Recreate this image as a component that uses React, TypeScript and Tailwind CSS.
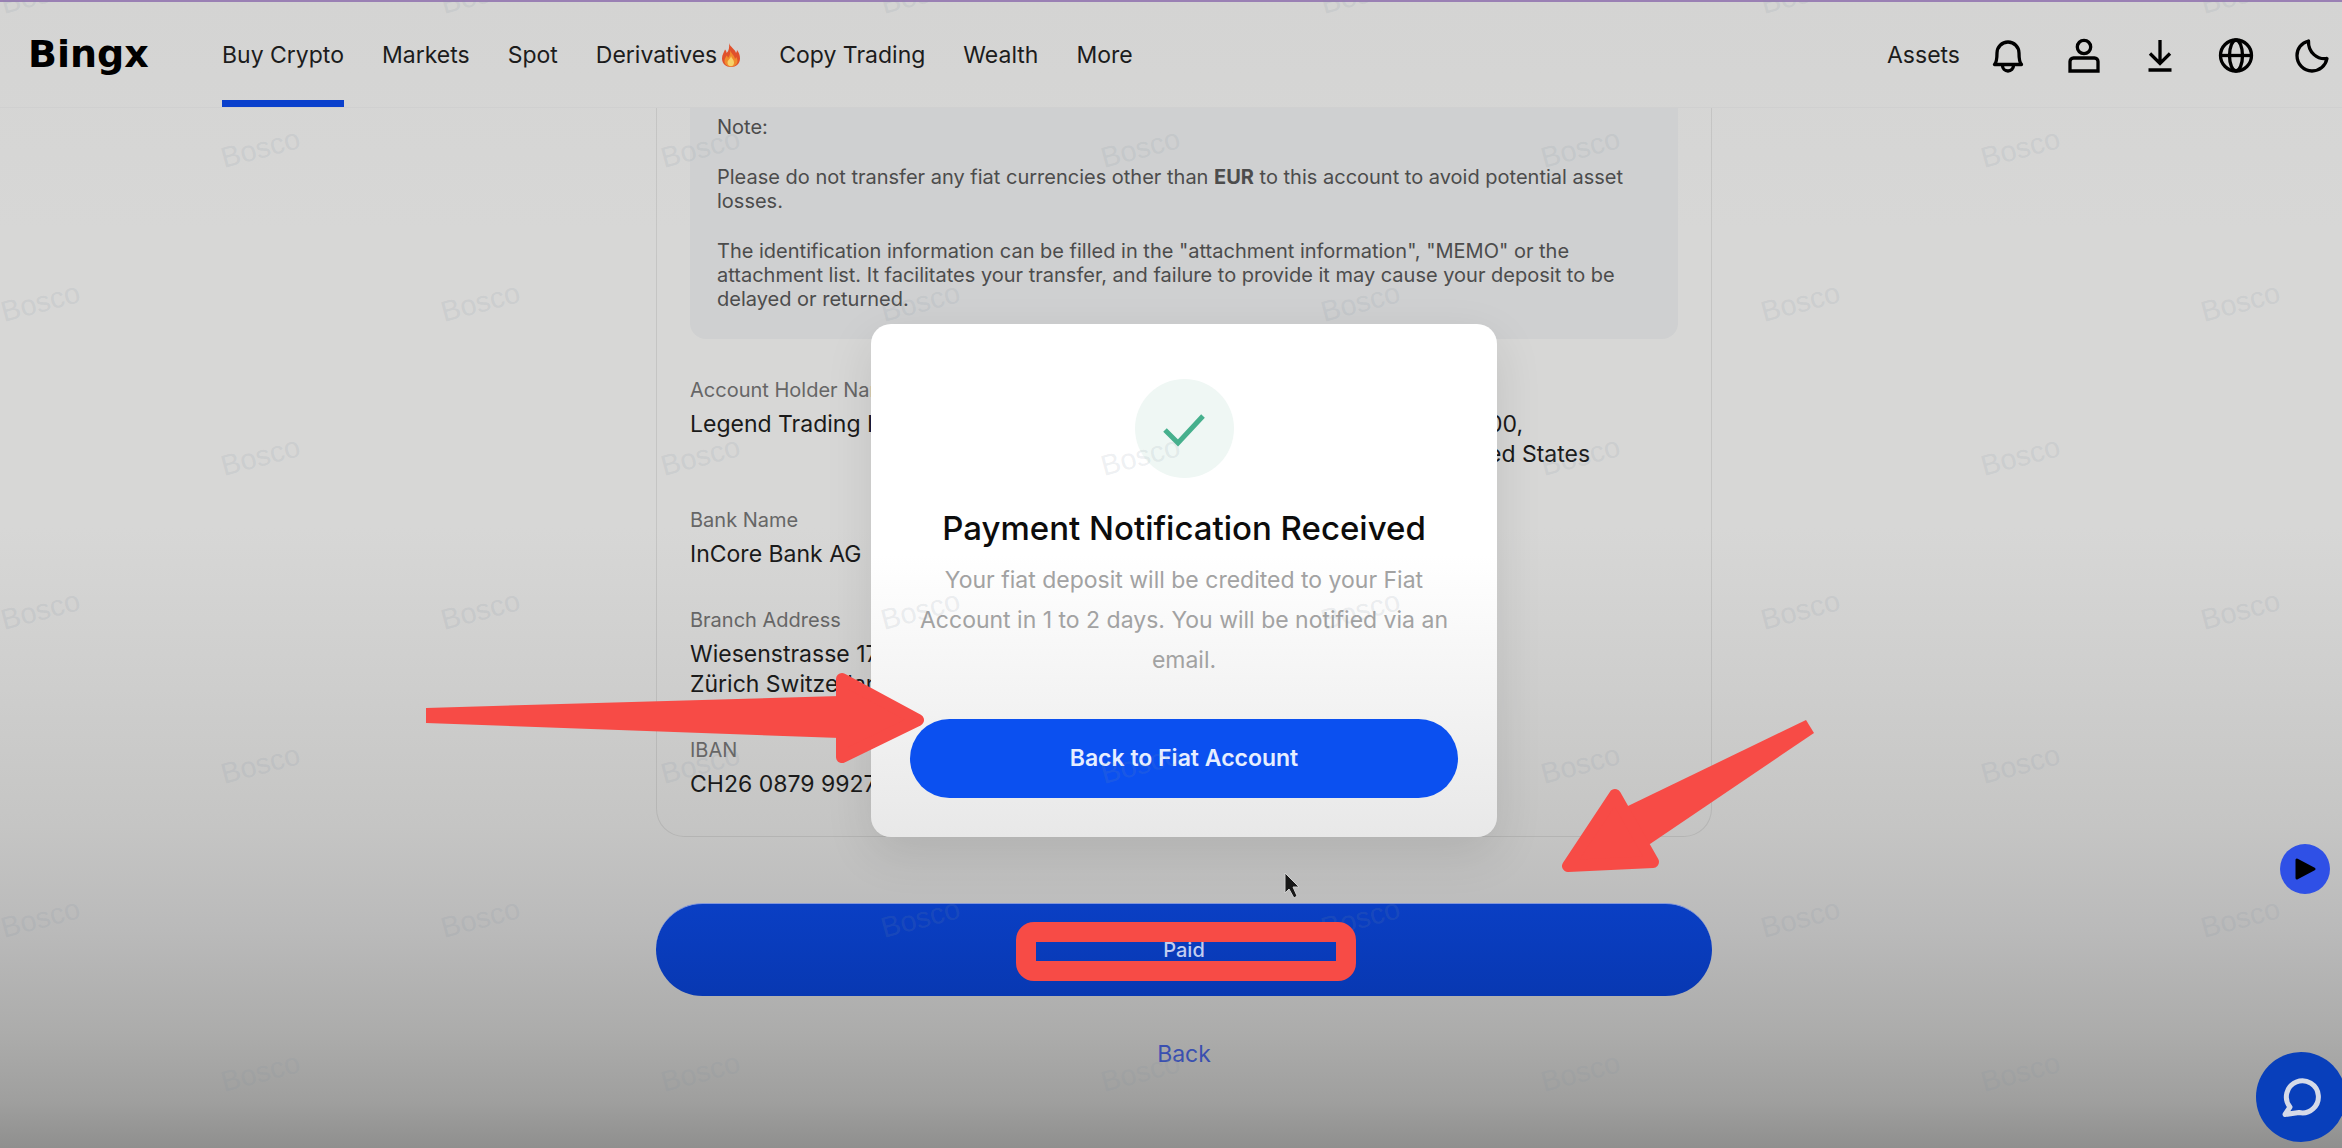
import type { ReactNode } from "react";

const NAV = ["Buy Crypto", "Markets", "Spot", "Derivatives", "Copy Trading", "Wealth", "More"];

function Flame() {
  return (
    <svg className="h-6 w-5" viewBox="0 0 20 24" aria-hidden="true">
      <path d="M8 0c1 4 6 6 7 10 .6-.8 1-1.800 1-3 2 2.500 3 5.500 3 8.500 0 5-4 8.500-9 8.500s-9-3.500-9-8.500c0-4 2-6 3-9 1 1 1.500 2 1.600 3.500C8 8 8.500 4 8 0z" fill="#e0512c" />
      <path d="M9 7c.5 3 4.500 5 5 9 .6-.5 1-1.200 1.200-2 1 1.500 1.300 3 1.300 4 0 3.500-3 5.500-6.500 5.500S3.500 21.500 3.500 18c0-2.500 1.500-4 2-5.500.8.600 1.300 1.300 1.500 2.500C9 13 9.500 10 9 7z" fill="#f08a2c" />
      <path d="M10 13c.3 2 3 3.500 3 6.500 0 2.300-1.300 3.800-3 3.800s-3.500-1.300-3.500-3.800C6.500 17 9.500 16 10 13z" fill="#f6d26a" />
    </svg>
  );
}

function Icon({ children }: { children: ReactNode }) {
  return (
    <svg className="size-9" viewBox="0 0 36 36" fill="none" stroke="currentColor" strokeWidth="3.3" aria-hidden="true">
      {children}
    </svg>
  );
}

const ACTIONS = [
  {
    label: "Notifications",
    icon: (
      <Icon>
        <path d="M4.500 27.500h27c-2-2-2.500-5-2.500-11.500a11 11 0 0 0-22 0c0 6.500-.5 9.500-2.500 11.500z" strokeLinejoin="round" />
        <path d="M12.500 28.500a5.500 5.500 0 0 0 11 0" />
      </Icon>
    ),
  },
  {
    label: "Profile",
    icon: (
      <Icon>
        <circle cx="18" cy="10" r="6.700" />
        <path d="M4 34V24.500a3.500 3.500 0 0 1 3.500-3.500h21a3.500 3.500 0 0 1 3.500 3.500V34z" />
      </Icon>
    ),
  },
  {
    label: "Download",
    icon: (
      <Icon>
        <path d="M18 3v23M8 16.500l10 10 10-10M6.500 33h23" />
      </Icon>
    ),
  },
  {
    label: "Language",
    icon: (
      <Icon>
        <circle cx="18" cy="18.500" r="15.500" />
        <ellipse cx="18" cy="18.500" rx="6.500" ry="15.500" />
        <path d="M3 18.500h30" />
      </Icon>
    ),
  },
  {
    label: "Dark mode",
    icon: (
      <Icon>
        <path d="M14.500 4C7 6 3 12 3 18.500 3 27 9.500 34 18 34c7.500 0 13.500-5 15-12.500-9.500 1.500-19-6-18.500-17.500z" strokeLinejoin="round" />
      </Icon>
    ),
  },
];

function Header() {
  return (
    <header className="flex h-[108px] items-stretch border-t-2 border-b border-t-[#9a80b4] border-b-[#d0d0d0] pr-3 pl-7 text-[23px] text-[#1c1c1c]">
      <a href="#" className="flex w-[194px] items-center font-['DejaVu_Sans'] text-[38px] font-bold text-black">
        Bingx
      </a>
      <nav className="flex gap-[38px]">
        {NAV.map((item, i) => (
          <a
            key={item}
            href="#"
            className={
              i === 0
                ? "flex items-center border-b-[7px] border-b-[#0a40cc] pt-2"
                : "flex items-center gap-1 pt-px"
            }
          >
            {item}
            {item === "Derivatives" && <Flame />}
          </a>
        ))}
      </nav>
      <div className="ml-auto flex items-center pt-px">
        <a href="#" className="mr-[30px]">
          Assets
        </a>
        <div className="flex gap-10 text-black">
          {ACTIONS.map((a) => (
            <button key={a.label} type="button" aria-label={a.label}>
              {a.icon}
            </button>
          ))}
        </div>
      </div>
    </header>
  );
}

function Field({ label, children }: { label: string; children: ReactNode }) {
  return (
    <div>
      <dt className="text-xl leading-[30px] text-[#666]">{label}</dt>
      <dd className="mt-1 text-[23px] leading-[30px] text-[#1a1a1a]">{children}</dd>
    </div>
  );
}

function BankDetails() {
  return (
    <section className="w-full rounded-b-[28px] border border-t-0 border-[#00000014] px-[33px] pb-[37px]">
      <div className="flex flex-col gap-[26px] rounded-b-2xl bg-[#cfd0d1] px-[27px] pt-[7px] pb-7 text-xl leading-6 text-[#4c4c4c]">
        <p>Note:</p>
        <p>
          Please do not transfer any fiat currencies other than <b>EUR</b> to this account to avoid potential asset
          losses.
        </p>
        <p>
          The identification information can be filled in the "attachment information", "MEMO" or the attachment list.
          It facilitates your transfer, and failure to provide it may cause your deposit to be delayed or returned.
        </p>
      </div>
      <dl className="mt-9 flex flex-col gap-9">
        <div className="grid grid-cols-2">
          <Field label="Account Holder Name">Legend Trading Inc</Field>
          <Field label="Account Holder Address">
            1000 Market Street, Suite 1200,
            <br />
            San Francisco, 941030, United States
          </Field>
        </div>
        <Field label="Bank Name">InCore Bank AG</Field>
        <Field label="Branch Address">
          Wiesenstrasse 17, 8952
          <br />
          Zürich Switzerland
        </Field>
        <Field label="IBAN">CH26 0879 9927</Field>
      </dl>
    </section>
  );
}

function PaymentDialog() {
  return (
    <div className="absolute inset-0 flex items-center justify-center pt-[13px] pl-[26px]">
      <div
        role="dialog"
        aria-labelledby="dialog-title"
        className="relative flex w-[626px] flex-col items-center rounded-[20px] bg-linear-to-b from-white from-45% to-[#e8e8e8] px-[39px] pt-[55px] pb-[39px] text-center shadow-[0_16px_48px_rgba(0,0,0,0.1)]"
      >
        <div className="flex size-[99px] items-center justify-center rounded-full bg-[#eff7f4]">
          <svg className="size-12" viewBox="0 0 48 48" fill="none" stroke="#46b08d" strokeWidth="5" aria-hidden="true">
            <path d="M5 25l13 13 25-27" />
          </svg>
        </div>
        <h1 id="dialog-title" className="mt-[30px] text-[33px] leading-10 font-medium whitespace-nowrap text-[#0c0c0c]">
          Payment Notification Received
        </h1>
        <p className="mt-3 text-[23px] leading-10 text-[#a2a2a2]">
          Your fiat deposit will be credited to your Fiat Account in 1 to 2 days. You will be notified via an email.
        </p>
        <button
          type="button"
          className="mt-[39px] h-[79px] w-full rounded-full bg-[#0b50f0] text-[23px] font-semibold text-[#e6eeff]"
        >
          Back to Fiat Account
        </button>
        {/* arrow to the dialog button */}
        <svg
          className="absolute top-[346px] right-[569px] z-30 h-[96px] w-[502px]"
          viewBox="0 0 502 96"
          fill="#f74b46"
          aria-hidden="true"
        >
          <path d="M0 38L414 26V68L0 53z" />
          <path d="M416 9L492 50 416 87z" stroke="#f74b46" strokeWidth="12" strokeLinejoin="round" />
        </svg>
      </div>
    </div>
  );
}

function Watermark() {
  return (
    <div className="pointer-events-none absolute inset-0 z-20 overflow-hidden" aria-hidden="true">
      <div className="-mt-[34px]">
        {Array.from({ length: 8 }, (_, row) => (
          <div key={row} className={row % 2 ? "flex h-[154px] pl-[220px]" : "flex h-[154px]"}>
            {Array.from({ length: 6 }, (_, col) => (
              <div key={col} className="w-[440px] shrink-0 pt-3">
                <span className="inline-block -rotate-15 font-['Liberation_Sans'] text-[29px] leading-8 text-[#8090a0]/15">
                  Bosco
                </span>
              </div>
            ))}
          </div>
        ))}
      </div>
    </div>
  );
}

export default function App() {
  return (
    <div className="relative min-h-screen overflow-hidden bg-[linear-gradient(#d4d4d3_0%,#d7d7d6_20%,#d7d7d6_46%,#cececd_60%,#c5c5c4_72%,#bababa_81%,#acacab_90%,#9f9f9e_96%,#8f8f8e_100%)] font-['Inter',sans-serif]">
      <Header />
      <main className="flex justify-center pl-[26px]">
        <div className="relative flex w-full max-w-[1056px] flex-col items-center">
          <BankDetails />
          <button
            type="button"
            className="relative mt-[66px] h-[93px] w-full rounded-full border-t border-[#8398dc] bg-linear-to-b from-[#0a3fc4] to-[#0838b2] text-xl font-medium text-[#c3cdf0]"
          >
            Paid
            {/* highlight frame */}
            <span className="absolute top-[18px] left-1/2 z-30 h-[59px] w-[340px] -translate-x-[168px] rounded-[18px] border-20 border-[#f74b46]" />
          </button>
          <a href="#" className="mt-[42px] text-[23px] leading-8 text-[#3a50b0]">
            Back
          </a>
          {/* arrow to the paid button */}
          <svg
            className="absolute top-[612px] -right-[102px] z-30 h-[152px] w-[252px]"
            viewBox="0 0 252 152"
            fill="#f74b46"
            aria-hidden="true"
          >
            <path d="M244 0L66 86 50 122 88 124 252 13z" />
            <path d="M53 75L6 146 91 142z" stroke="#f74b46" strokeWidth="12" strokeLinejoin="round" />
          </svg>
          <svg className="absolute top-[764px] left-[628px] z-30 h-7 w-4" viewBox="0 0 16 28" aria-hidden="true">
            <path d="M1 1v20l4-4 5 9 3-2-4-9h6z" fill="#181818" stroke="#d0d0d0" strokeWidth="1" />
          </svg>
        </div>
      </main>
      <PaymentDialog />
      <Watermark />
      <div className="absolute -right-1 bottom-[6px] z-30 flex flex-col items-center gap-[158px]">
        <button
          type="button"
          aria-label="Play tutorial"
          className="ml-2 flex size-[50px] items-center justify-center rounded-full bg-[#2f50e6]"
        >
          <svg className="size-6" viewBox="0 0 24 24" aria-hidden="true">
            <path d="M4 3v18L21 12z" stroke="#000" strokeWidth="3" strokeLinejoin="round" />
          </svg>
        </button>
        <button
          type="button"
          aria-label="Open chat"
          className="flex size-[90px] items-center justify-center rounded-full bg-[#083fbb]"
        >
          <svg className="size-10" viewBox="0 0 40 40" fill="none" stroke="#d5dae8" strokeWidth="5" aria-hidden="true">
            <path d="M9 30A16 16 0 1 1 18 35.500L4 37.500z" strokeLinejoin="round" />
          </svg>
        </button>
      </div>
    </div>
  );
}
